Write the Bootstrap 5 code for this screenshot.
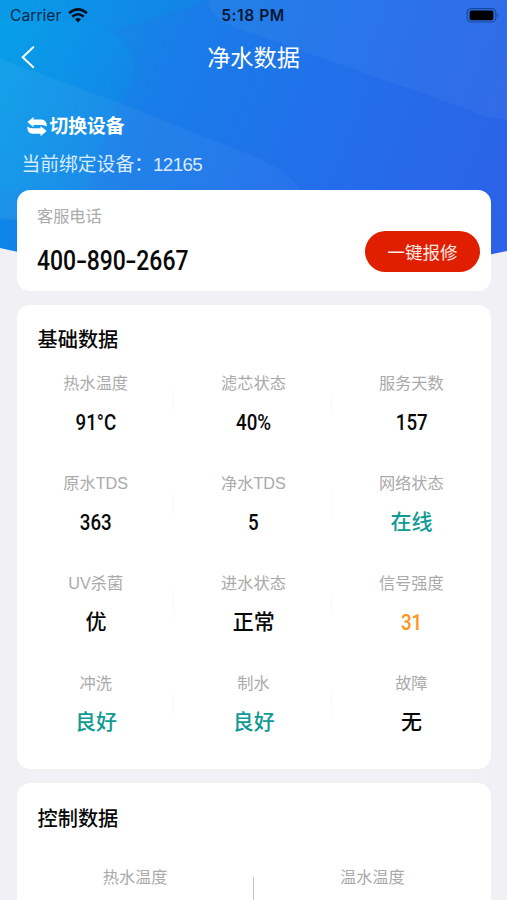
<!DOCTYPE html>
<html lang="zh-CN">
<head>
<meta charset="utf-8">
<meta name="viewport" content="width=device-width, initial-scale=1">
<title>净水数据</title>
<link href="https://cdn.jsdelivr.net/npm/bootstrap@5.3.0/dist/css/bootstrap.min.css" rel="stylesheet">
<style>
body{background:#f0f0f5;font-family:Inter,"Noto Sans CJK SC",sans-serif;color:#080808;height:900px;overflow:hidden}
.screen{width:507px;height:900px;overflow:hidden;position:relative}
.backdrop{position:absolute;left:0;top:0;z-index:0}
.content{position:relative;z-index:1}
.statusbar{height:30px;padding:0 8px 0 10px;display:grid;grid-template-columns:1fr auto 1fr;font-size:15.7px;line-height:30px;color:#082a4c}
.wifi{margin-left:7px}
.clock{font-weight:600;color:#06172f;font-size:15.7px;line-height:31px;letter-spacing:.5px;margin-left:-3px}
.titlebar{height:56px;padding:0 20px;display:grid;grid-template-columns:1fr auto 1fr}
.titlebar h1{font-size:23.2px;line-height:56px;font-weight:400}
.device{height:104px;padding:26px 22px 0}
.switch{font-size:18.8px;line-height:30px;padding-left:5px;gap:2.5px}
.bound{font-size:18.8px;line-height:30px;margin-top:8px;margin-left:-.5px;color:#d9ebff;font-family:Inter,"Noto Sans CJK SC",sans-serif}
.bound span{font-family:"Liberation Sans",sans-serif;letter-spacing:-.6px}
.panel{border:0;border-radius:13px;background:#fff;margin:0 16.5px 14px 17px}
.phone-card{height:101px;padding:0 10.5px 0 20px}
.caption{font-size:16.2px;line-height:24px;color:#aaa;font-family:"Liberation Sans","Noto Sans CJK SC",sans-serif}
.din{font-family:Roboto,"Noto Sans CJK SC",sans-serif;font-weight:500;display:inline-block;transform:scaleX(.85)}
.phone{font-size:27px;line-height:36px;margin-top:15px;transform-origin:left;white-space:nowrap}
.phone-card .caption{margin-top:2px}
.dash{display:inline-block;transform:scaleX(1.45);margin:0 1.6px}
.repair{width:115px;height:41px;background:#df1f00!important;border:0;color:#ffeae5!important;font-size:17.6px;line-height:43px;padding:0;margin-top:21px}
.panel h2{font-size:20.2px;line-height:30px;font-weight:500;margin:0;padding:20px 0 0 20.5px}
.control-card h2{padding-top:21px}
.data-card{height:464px}
.control-card{height:200px}
.cell{height:100px;padding-top:16px;text-align:center;position:relative}
.cell .caption{margin-left:-.5px}
.val{font-size:22px;line-height:32px;margin-top:12px}
.cjk{font-size:21px;font-weight:500;line-height:32px;margin-top:11px}
.ok{color:#109b94}.warn{color:#ff931c}
.split{background:linear-gradient(#fff,#f6f6f6 50%,#fff) right 1px top 28px/1px 40px no-repeat}
.controls{padding-top:31px}
.rule{width:1px;height:70px;background:#c4c4c4;margin-top:12px}
</style>
</head>
<body>
<div class="screen">
<svg class="backdrop" width="507" height="300" viewBox="0 0 507 300" aria-hidden="true">
  <defs>
    <linearGradient id="sky" gradientUnits="userSpaceOnUse" x1="0" y1="50" x2="490" y2="250"><stop offset="0" stop-color="#0d98e7"/><stop offset=".3" stop-color="#187de8"/><stop offset=".65" stop-color="#236eea"/><stop offset="1" stop-color="#2c62e7"/></linearGradient>
    <linearGradient id="glow" gradientUnits="userSpaceOnUse" x1="0" y1="0" x2="140" y2="100"><stop offset="0" stop-color="#00a5ea" stop-opacity=".45"/><stop offset="1" stop-color="#009be8" stop-opacity=".2"/></linearGradient>
    <linearGradient id="band" gradientUnits="userSpaceOnUse" x1="0" y1="60" x2="300" y2="190"><stop offset="0" stop-color="#fff" stop-opacity=".05"/><stop offset="1" stop-color="#fff" stop-opacity=".03"/></linearGradient>
    <clipPath id="curve"><path d="M0 0H507V251Q253 305 0 248Z"/></clipPath>
  </defs>
  <g clip-path="url(#curve)">
    <rect width="507" height="300" fill="url(#sky)"/>
    <path d="M0 0H207Q170 15 108 31Q70 12 0 18Z" fill="#00a0ea" fill-opacity=".2"/>
    <path d="M0 18Q70 12 108 31Q144 52 130 85Q105 130 87 190H0Z" fill="url(#glow)"/>
    <path d="M207 0Q211 22 253 34L470 110Q492 121 507 119V0Z" fill="#fff" fill-opacity=".04"/>
    <path d="M0 59L125 105L250 155Q285 168 300 190V220H0Z" fill="url(#band)"/>
    <path d="M0 217Q12 219 30 224V260H0Z" fill="#0875ea" fill-opacity=".3"/>
  </g>
</svg>
<div class="content">
  <header class="text-white">
    <div class="statusbar">
      <div class="d-flex align-items-center"><span>Carrier</span>
        <svg class="wifi" width="20" height="15" viewBox="0 0 20 15" fill="none" stroke="#04101f" stroke-width="2.5"><path d="M1.1 5.2Q10-2.5 18.9 5.2M4.2 8.8Q10 3.8 15.8 8.8"/><path d="M7 11.2Q10 8.6 13 11.2L10 14.4Z" fill="#04101f" stroke="none"/></svg>
      </div>
      <span class="clock">5:18 PM</span>
      <div class="d-flex align-items-center justify-content-end">
        <svg width="33" height="16" viewBox="0 0 33 16"><rect x="1.2" y=".6" width="28.6" height="13.4" rx="4" fill="none" stroke="#174b99" stroke-width="1.2"/><rect x="3.6" y="2.4" width="23.8" height="9.8" rx="2" fill="#000"/><path d="M31 5.1Q33 7.5 31 9.9Z" fill="#174b99"/></svg>
      </div>
    </div>
    <div class="titlebar">
      <div class="d-flex align-items-center"><svg width="16" height="26" viewBox="0 0 16 26" fill="none" stroke="#fff" stroke-width="2"><path d="M13.8 1.8L2.7 12.3L13.8 22.8"/></svg></div>
      <h1 class="m-0">净水数据</h1>
    </div>
    <div class="device">
      <div class="switch d-flex align-items-center fw-bold">
        <svg width="20" height="20" viewBox="0 0 20 20" fill="#fff"><path d="M.3 5L6.5 0V2.6H14.5Q19.8 3 19.8 9.6Q18 8.1 14.5 8.1H6.5V10.3Z"/><path d="M19.7 14L13.5 8.9V11.2H5.5Q2 11.2.2 9.4Q.3 16.3 5.5 16.7H13.5V19.2Z"/></svg>
        <span>切换设备</span>
      </div>
      <div class="bound">当前绑定设备：<span>12165</span></div>
    </div>
  </header>
  <main>
    <section class="card panel phone-card flex-row justify-content-between align-items-center">
      <div>
        <div class="caption">客服电话</div>
        <div class="din phone">400<span class="dash">-</span>890<span class="dash">-</span>2667</div>
      </div>
      <button class="btn rounded-pill repair">一键报修</button>
    </section>
    <section class="card panel data-card">
      <h2>基础数据</h2>
      <div class="row g-0">
        <div class="col-4 cell split"><div class="caption">热水温度</div><div class="din val">91°C</div></div>
        <div class="col-4 cell split"><div class="caption">滤芯状态</div><div class="din val">40%</div></div>
        <div class="col-4 cell"><div class="caption">服务天数</div><div class="din val">157</div></div>
        <div class="col-4 cell split"><div class="caption">原水TDS</div><div class="din val">363</div></div>
        <div class="col-4 cell split"><div class="caption">净水TDS</div><div class="din val">5</div></div>
        <div class="col-4 cell"><div class="caption">网络状态</div><div class="cjk ok">在线</div></div>
        <div class="col-4 cell split"><div class="caption">UV杀菌</div><div class="cjk">优</div></div>
        <div class="col-4 cell split"><div class="caption">进水状态</div><div class="cjk">正常</div></div>
        <div class="col-4 cell"><div class="caption">信号强度</div><div class="din val warn">31</div></div>
        <div class="col-4 cell split"><div class="caption">冲洗</div><div class="cjk ok">良好</div></div>
        <div class="col-4 cell split"><div class="caption">制水</div><div class="cjk ok">良好</div></div>
        <div class="col-4 cell"><div class="caption">故障</div><div class="cjk">无</div></div>
      </div>
    </section>
    <section class="card panel control-card">
      <h2>控制数据</h2>
      <div class="controls d-flex text-center">
        <div class="caption flex-fill">热水温度</div>
        <div class="rule"></div>
        <div class="caption flex-fill">温水温度</div>
      </div>
    </section>
  </main>
</div>
</div>
<script src="https://cdn.jsdelivr.net/npm/bootstrap@5.3.0/dist/js/bootstrap.bundle.min.js"></script>
</body>
</html>
